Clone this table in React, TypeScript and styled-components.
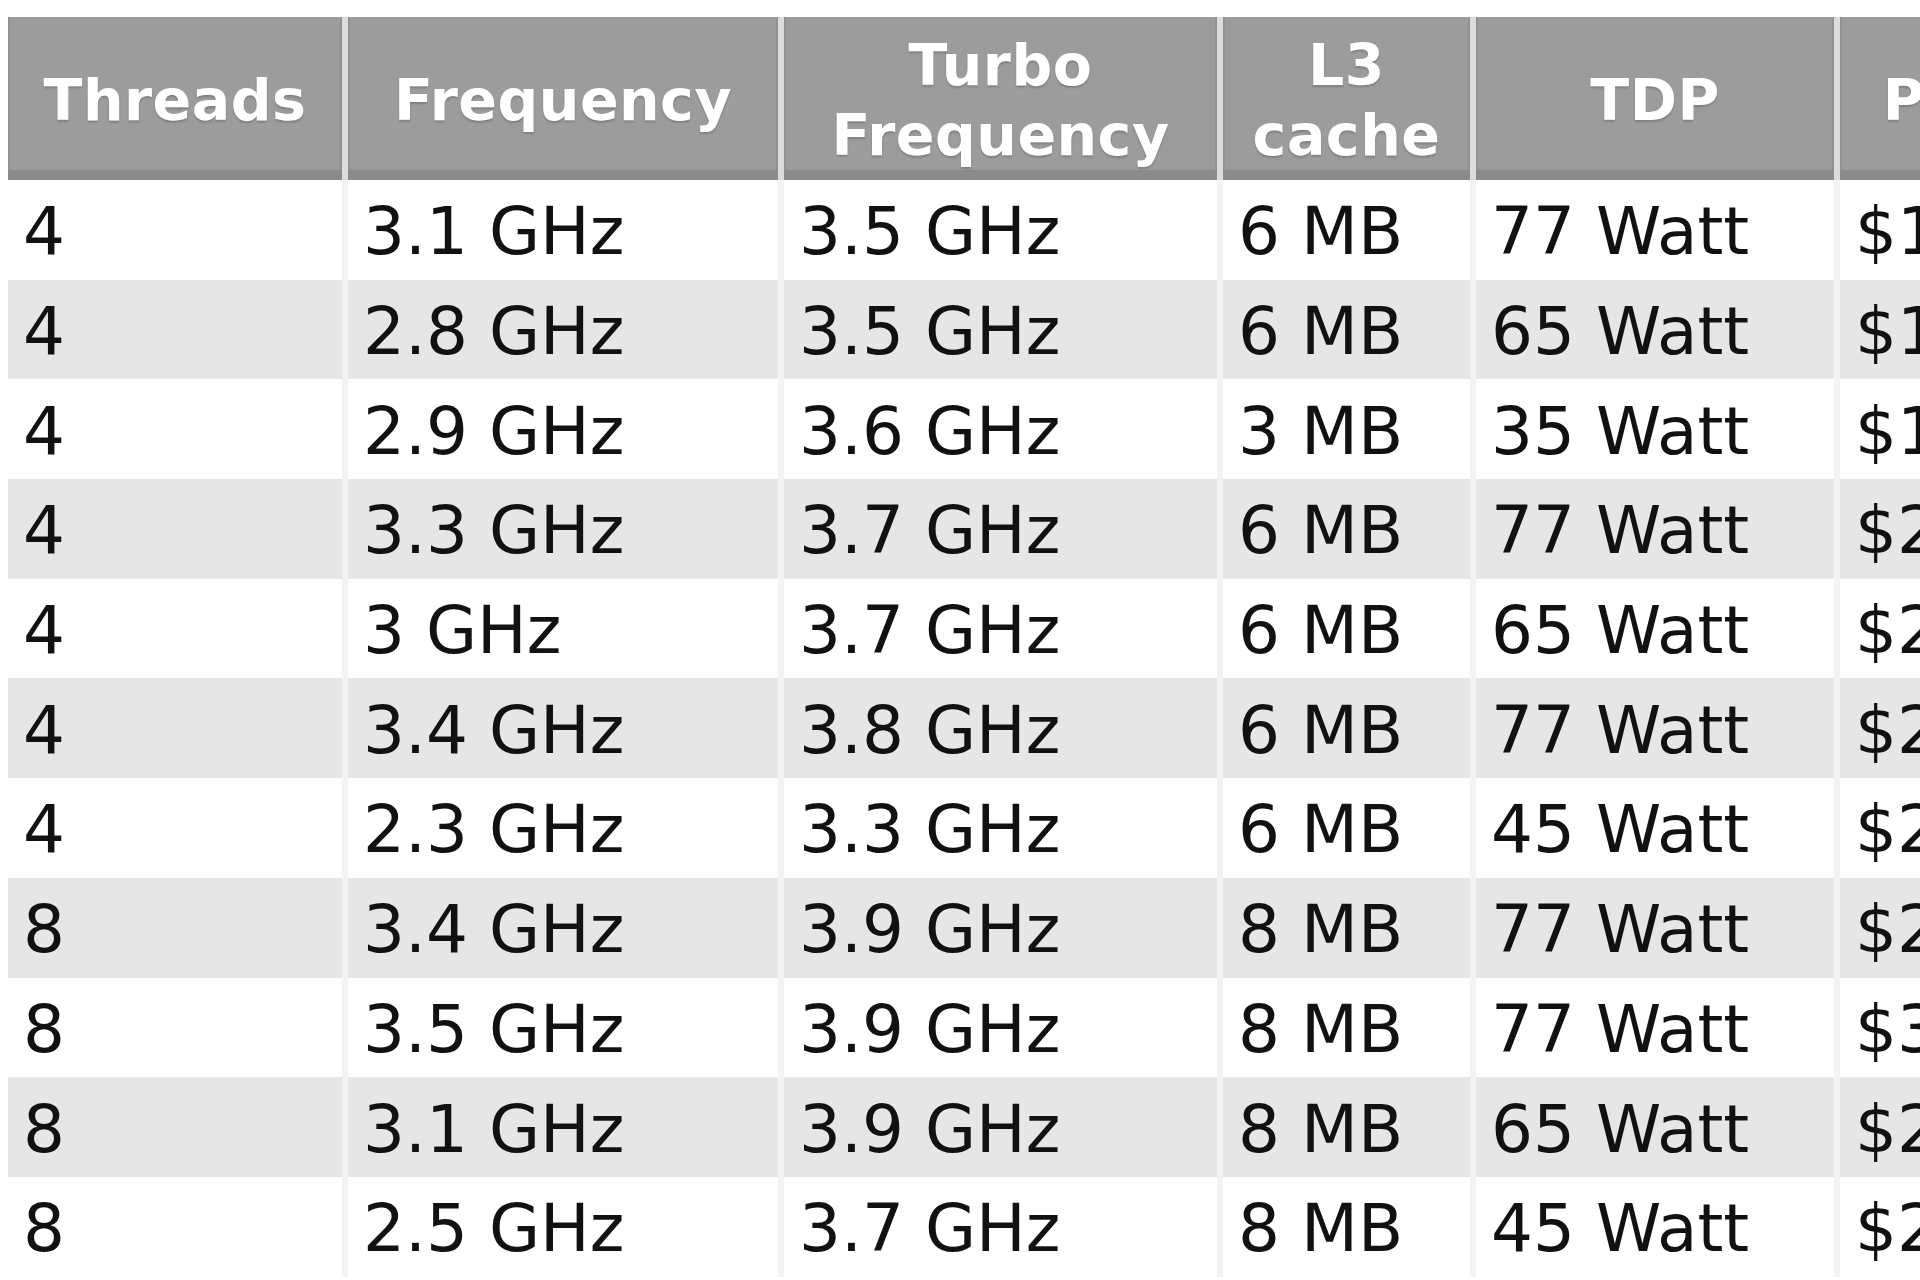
import styled, { createGlobalStyle } from 'styled-components';

type Cpu = {
  threads: number;
  frequency: string;
  turbo: string;
  cache: string;
  tdp: string;
  price: string;
};

const cpus: Cpu[] = [
  { threads: 4, frequency: '3.1 GHz', turbo: '3.5 GHz', cache: '6 MB', tdp: '77 Watt', price: '$182' },
  { threads: 4, frequency: '2.8 GHz', turbo: '3.5 GHz', cache: '6 MB', tdp: '65 Watt', price: '$192' },
  { threads: 4, frequency: '2.9 GHz', turbo: '3.6 GHz', cache: '3 MB', tdp: '35 Watt', price: '$192' },
  { threads: 4, frequency: '3.3 GHz', turbo: '3.7 GHz', cache: '6 MB', tdp: '77 Watt', price: '$213' },
  { threads: 4, frequency: '3 GHz', turbo: '3.7 GHz', cache: '6 MB', tdp: '65 Watt', price: '$213' },
  { threads: 4, frequency: '3.4 GHz', turbo: '3.8 GHz', cache: '6 MB', tdp: '77 Watt', price: '$242' },
  { threads: 4, frequency: '2.3 GHz', turbo: '3.3 GHz', cache: '6 MB', tdp: '45 Watt', price: '$213' },
  { threads: 8, frequency: '3.4 GHz', turbo: '3.9 GHz', cache: '8 MB', tdp: '77 Watt', price: '$294' },
  { threads: 8, frequency: '3.5 GHz', turbo: '3.9 GHz', cache: '8 MB', tdp: '77 Watt', price: '$339' },
  { threads: 8, frequency: '3.1 GHz', turbo: '3.9 GHz', cache: '8 MB', tdp: '65 Watt', price: '$294' },
  { threads: 8, frequency: '2.5 GHz', turbo: '3.7 GHz', cache: '8 MB', tdp: '45 Watt', price: '$284' },
];

// column widths, separator included
const columns = [340, 436, 439, 253, 364, 256];

const GlobalStyle = createGlobalStyle`
  html,
  body {
    margin: 0;
    overflow: hidden;
    background: #fff;
  }
`;

const Page = styled.div`
  padding: 17px 0 0 8px;
  width: max-content;
`;

const Table = styled.table`
  width: ${columns.reduce((a, b) => a + b, 0)}px;
  table-layout: fixed;
  border-collapse: separate;
  border-spacing: 0;
  font-family: 'DejaVu Sans', Verdana, sans-serif;
`;

const Col = styled.col<{ $width: number }>`
  width: ${(props) => props.$width}px;
`;

const HeadRow = styled.tr`
  height: 163px;
`;

const HeadCell = styled.th`
  padding: 12px 6px 10px;
  background: #9c9c9c;
  border-right: 6px solid #dcdcdc;
  box-shadow: inset 0 -10px 0 #8b8b8b, inset 2px 0 0 #929292,
    inset -2px 0 0 #929292;
  color: #fff;
  font-size: 57px;
  font-weight: 700;
  line-height: 70px;
  letter-spacing: 0.5px;
  text-align: center;
  vertical-align: middle;
  text-shadow: 0 2px 2px rgba(0, 0, 0, 0.18);
  white-space: nowrap;
`;

const Row = styled.tr<{ $striped: boolean }>`
  height: 99.7px;
  background: ${(props) => (props.$striped ? '#e6e6e6' : '#fff')};
`;

const Cell = styled.td`
  padding: 4px 0 0 15px;
  border-right: 6px solid #f3f3f3;
  color: #111;
  font-size: 66px;
  vertical-align: middle;
  white-space: nowrap;
  overflow: hidden;
`;

const App: React.FC = () => (
  <>
    <GlobalStyle />
    <Page>
      <Table>
        <colgroup>
          {columns.map((width, i) => (
            <Col key={i} $width={width} />
          ))}
        </colgroup>
        <thead>
          <HeadRow>
            <HeadCell>Threads</HeadCell>
            <HeadCell>Frequency</HeadCell>
            <HeadCell>
              Turbo
              <br />
              Frequency
            </HeadCell>
            <HeadCell>
              L3
              <br />
              cache
            </HeadCell>
            <HeadCell>TDP</HeadCell>
            <HeadCell>Price</HeadCell>
          </HeadRow>
        </thead>
        <tbody>
          {cpus.map((cpu, i) => (
            <Row key={i} $striped={i % 2 === 1}>
              <Cell>{cpu.threads}</Cell>
              <Cell>{cpu.frequency}</Cell>
              <Cell>{cpu.turbo}</Cell>
              <Cell>{cpu.cache}</Cell>
              <Cell>{cpu.tdp}</Cell>
              <Cell>{cpu.price}</Cell>
            </Row>
          ))}
        </tbody>
      </Table>
    </Page>
  </>
);

export default App;
